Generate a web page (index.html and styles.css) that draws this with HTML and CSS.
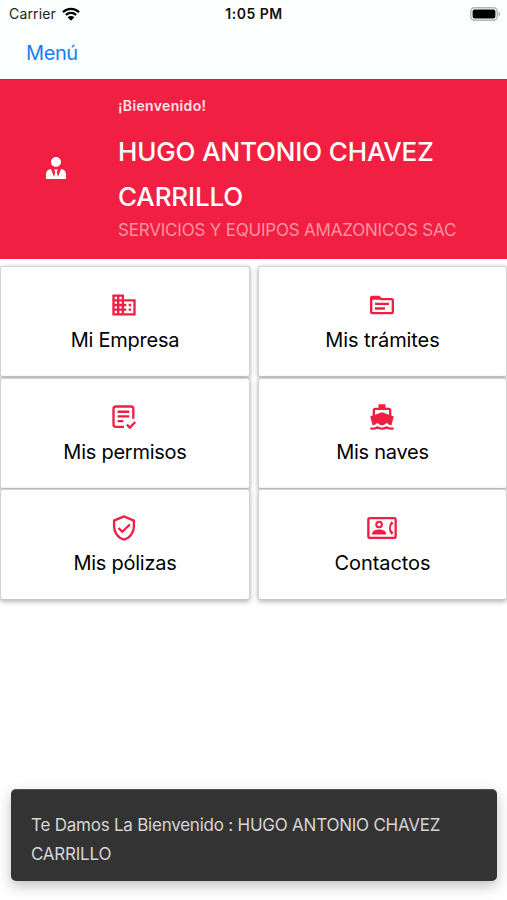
FILE: index.html
```html
<!DOCTYPE html>
<html lang="es">
<head>
    <meta charset="UTF-8">
    <meta name="viewport" content="width=device-width, initial-scale=1.0">
    <title>Menú</title>
    <link rel="stylesheet" href="styles.css">
</head>
<body>
    <header class="top-bar">
        <div class="status-bar">
            <div class="carrier">
                <span>Carrier</span>
                <svg class="wifi" viewBox="0 0 18 14" aria-hidden="true">
                    <path d="M1 5.2a11.3 11.3 0 0 1 16 0M3.9 8a7.3 7.3 0 0 1 10.2 0" fill="none" stroke="#000" stroke-width="2.3"/>
                    <path d="M9 13.8l-3.4-3.5a4.8 4.8 0 0 1 6.8 0z"/>
                </svg>
            </div>
            <span class="time">1:05 PM</span>
            <svg class="battery" viewBox="0 0 31 14" aria-hidden="true">
                <rect x=".8" y=".8" width="26.4" height="12.4" rx="3.6" fill="#fff" stroke="#b5b5b5" stroke-width="1.4"/>
                <rect x="2.6" y="2.5" width="22.8" height="9" rx="2"/>
                <path d="M28.6 4.8c2 .8 2 3.6 0 4.4z" fill="#a5a5a5"/>
            </svg>
        </div>
        <nav class="nav">
            <a class="menu-link" href="#">Menú</a>
        </nav>
    </header>

    <section class="profile">
        <div class="avatar">
            <svg viewBox="0 0 20 22" fill="#fff" aria-hidden="true">
                <circle cx="10" cy="5" r="5"/>
                <path d="M0 22v-4.200C0 14 2.400 12.200 5 12l3 8 1.200-5-1-2.500h3.600l-1 2.500 1.200 5 3-8c2.600.2 5 2 5 5.800V22z"/>
            </svg>
        </div>
        <div class="profile-info">
            <p class="greeting">¡Bienvenido!</p>
            <h1>HUGO ANTONIO CHAVEZ CARRILLO</h1>
            <p class="company">SERVICIOS Y EQUIPOS AMAZONICOS SAC</p>
        </div>
    </section>

    <main class="grid">
        <div class="column">
            <a class="card" href="#">
                <svg class="icon" viewBox="0 0 24 24">
                    <path d="M12 7V3H2v18h20V7H12zM6 19H4v-2h2v2zm0-4H4v-2h2v2zm0-4H4V9h2v2zm0-4H4V5h2v2zm4 12H8v-2h2v2zm0-4H8v-2h2v2zm0-4H8V9h2v2zm0-4H8V5h2v2zm10 12h-8v-2h2v-2h-2v-2h2v-2h-2V9h8v10zm-2-8h-2v2h2v-2zm0 4h-2v2h2v-2z"/>
                </svg>
                <span class="label">Mi Empresa</span>
            </a>
            <a class="card" href="#">
                <svg class="icon line" viewBox="0 0 24 24">
                    <path d="M12 20.500H5a2 2 0 0 1-2-2V5a2 2 0 0 1 2-2h13a2 2 0 0 1 2 2v8.500M6.500 7.500h10M6.500 11.500h10M6.500 15.500h5M14.500 18.500l2.500 2.500 4.700-4.700"/>
                </svg>
                <span class="label">Mis permisos</span>
            </a>
            <a class="card" href="#">
                <svg class="icon line" viewBox="0 0 24 24">
                    <path d="M12 2.100L3.500 5.650V11c0 4.520 3.300 9.690 8.500 10.930 5.200-1.240 8.500-6.410 8.500-10.930V5.650zM7.300 12l3.200 3.200L17 9"/>
                </svg>
                <span class="label">Mis pólizas</span>
            </a>
        </div>
        <div class="column">
            <a class="card" href="#">
                <svg class="icon line" viewBox="0 0 24 24">
                    <path d="M2.700 7V6a1 1 0 0 1 1-1h5.600l2 2h9a1 1 0 0 1 1 1v10a1 1 0 0 1-1 1H3.700a1 1 0 0 1-1-1zM2.700 6.500h8M6 11h12M6 15h8.500"/>
                </svg>
                <span class="label label-wide">Mis trámites</span>
            </a>
            <a class="card" href="#">
                <svg class="icon" viewBox="0 0 24 24">
                    <path d="M20 21c-1.39 0-2.78-.47-4-1.32-2.44 1.71-5.56 1.71-8 0C6.78 20.53 5.39 21 4 21H2v2h2c1.38 0 2.74-.35 4-.99 2.52 1.29 5.48 1.29 8 0 1.26.65 2.62.99 4 .99h2v-2h-2zM3.95 19H4c1.6 0 3.02-.88 4-2 .98 1.12 2.4 2 4 2s3.02-.88 4-2c.98 1.12 2.4 2 4 2h.05l1.89-6.68c.08-.26.06-.54-.06-.78s-.34-.42-.6-.5L20 10.62V6c0-1.1-.9-2-2-2h-3V1H9v3H6c-1.1 0-2 .9-2 2v4.62l-1.29.42c-.26.08-.48.26-.6.5s-.15.52-.06.78L3.95 19zM6 6h12v3.97L12 8 6 9.97V6z"/>
                </svg>
                <span class="label">Mis naves</span>
            </a>
            <a class="card" href="#">
                <svg class="icon wide" viewBox="0 0 26 24">
                    <rect x="1.3" y="3.5" width="23.4" height="17" rx="1.4" fill="none" stroke="#ee1f43" stroke-width="2"/>
                    <circle cx="10.5" cy="9" r="2.4" fill="none" stroke="#ee1f43" stroke-width="1.8"/>
                    <path d="M4.500 17.500v-1c0-2 3.600-3.200 6-3.200s6 1.200 6 3.200v1z"/>
                    <path d="M21.800 7c-2.800 2.800-2.800 7.200 0 10" fill="none" stroke="#ee1f43" stroke-width="1.6"/>
                    <path d="M21.300 6.300l1.400 1.900-1.400 1.700-1.800-.4zM21.300 17.700l1.400-1.900-1.400-1.700-1.800.4z"/>
                </svg>
                <span class="label label-wide">Contactos</span>
            </a>
        </div>
    </main>

    <div class="toast">Te Damos La Bienvenido : HUGO ANTONIO CHAVEZ CARRILLO</div>
</body>
</html>
```
FILE: styles.css
```css
* {
    box-sizing: border-box;
}
body {
    margin: 0;
    min-height: 900px;
    display: flex;
    flex-direction: column;
    background: #fff;
    color: #000;
    font-family: Inter, Roboto, sans-serif;
}
a {
    color: inherit;
    text-decoration: none;
}
p, h1 {
    margin: 0;
}
.top-bar {
    height: 79px;
    background: #fbfffe;
}
.status-bar {
    height: 27px;
    padding: 0 6px 0 9px;
    display: grid;
    grid-template-columns: 1fr auto 1fr;
    align-items: center;
    font-size: 14px;
    color: #222;
}
.carrier {
    display: flex;
    align-items: center;
    gap: 6px;
    letter-spacing: 0.15px;
}
.wifi {
    width: 18px;
    height: 14px;
}
.time {
    font-weight: 600;
    letter-spacing: 0.5px;
    margin-right: 2px;
    color: #111;
}
.battery {
    width: 31px;
    height: 14px;
    justify-self: end;
}
.nav {
    height: 51px;
    padding: 0 26px;
    display: flex;
    align-items: center;
}
.menu-link {
    font-size: 20px;
    letter-spacing: -0.4px;
    color: #157efb;
}
.profile {
    height: 180px;
    display: flex;
    background: #f11f42;
    border-top: 1px solid #d91c3c;
    color: #fff;
}
.avatar {
    width: 112px;
    padding-bottom: 3px;
    display: flex;
    align-items: center;
    justify-content: center;
}
.avatar svg {
    width: 20px;
    height: 22px;
}
.profile-info {
    width: 370px;
    padding: 16px 0 0 6px;
}
.greeting {
    font-size: 14px;
    line-height: 20px;
    font-weight: 600;
    letter-spacing: 0.35px;
    color: #ffe3e6;
}
h1 {
    margin-top: 14px;
    font-size: 26px;
    line-height: 44.5px;
    font-weight: 500;
    letter-spacing: -0.15px;
}
.company {
    font-size: 17px;
    line-height: 22px;
    letter-spacing: -0.2px;
    color: #f992a2;
    white-space: nowrap;
}
.grid {
    padding-top: 7px;
    display: grid;
    grid-template-columns: 250px 249px;
    gap: 8px;
}
.column {
    display: flex;
    flex-direction: column;
    gap: 0.5px;
}
.card {
    height: 111px;
    display: flex;
    flex-direction: column;
    align-items: center;
    padding-top: 24px;
    background: #fff;
    border: 1px solid #d2d2d2;
    border-bottom-color: #c8c8c8;
    border-radius: 3px;
    box-shadow: 0 2px 5px rgba(0, 0, 0, 0.25), 0 0 5px rgba(0, 0, 0, 0.08);
}
.icon {
    width: 28px;
    height: 28px;
    margin-right: 2px;
    fill: #ee1f43;
}
.icon.line {
    fill: none;
    stroke: #ee1f43;
    stroke-width: 2;
}
.icon.wide {
    width: 32px;
}
.label {
    margin-top: 8px;
    font-size: 20px;
    line-height: 26px;
    letter-spacing: -0.25px;
}
.label-wide {
    letter-spacing: -0.08px;
}
.toast {
    margin: auto 10px 19px 11px;
    height: 92px;
    padding: 21px 20px;
    background: #333;
    color: #d6d6d6;
    border-radius: 5px;
    border-top: 1px solid #555;
    box-shadow: 0 5px 14px rgba(0, 0, 0, 0.25);
    font-size: 17px;
    line-height: 28.5px;
    letter-spacing: -0.23px;
}
```
